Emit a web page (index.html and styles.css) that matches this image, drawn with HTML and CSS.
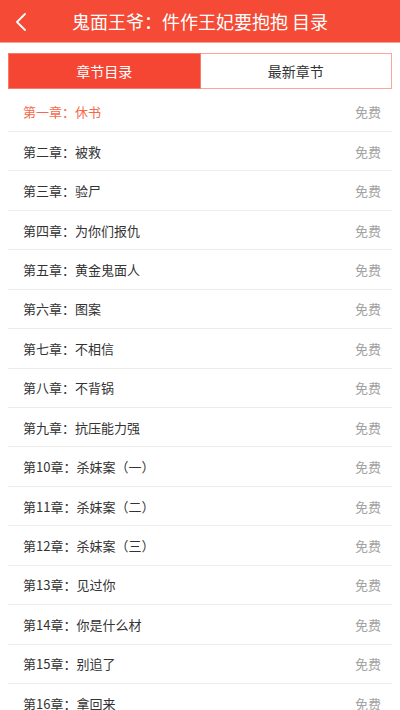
FILE: index.html
```html
<!DOCTYPE html>
<html lang="zh-CN">
<head>
<meta charset="utf-8">
<title>目录</title>
<link rel="stylesheet" href="styles.css">
</head>
<body>
<header class="header">
  <div class="back">
    <svg width="14" height="18" viewBox="0 0 14 18"><polyline points="11,1 3,9 11,17" fill="none" stroke="#fff" stroke-width="1.8" stroke-linecap="round" stroke-linejoin="round"/></svg>
  </div>
  <h1 class="title">鬼面王爷：件作王妃要抱抱 目录</h1>
  <div class="spacer"></div>
</header>
<nav class="tabs">
  <div class="tab active">章节目录</div>
  <div class="tab">最新章节</div>
</nav>
<ul class="list">
  <li class="row current"><span class="name">第一章：休书</span><span class="free">免费</span></li>
  <li class="row"><span class="name">第二章：被救</span><span class="free">免费</span></li>
  <li class="row"><span class="name">第三章：验尸</span><span class="free">免费</span></li>
  <li class="row"><span class="name">第四章：为你们报仇</span><span class="free">免费</span></li>
  <li class="row"><span class="name">第五章：黄金鬼面人</span><span class="free">免费</span></li>
  <li class="row"><span class="name">第六章：图案</span><span class="free">免费</span></li>
  <li class="row"><span class="name">第七章：不相信</span><span class="free">免费</span></li>
  <li class="row"><span class="name">第八章：不背锅</span><span class="free">免费</span></li>
  <li class="row"><span class="name">第九章：抗压能力强</span><span class="free">免费</span></li>
  <li class="row"><span class="name">第10章：杀妹案（一）</span><span class="free">免费</span></li>
  <li class="row"><span class="name">第11章：杀妹案（二）</span><span class="free">免费</span></li>
  <li class="row"><span class="name">第12章：杀妹案（三）</span><span class="free">免费</span></li>
  <li class="row"><span class="name">第13章：见过你</span><span class="free">免费</span></li>
  <li class="row"><span class="name">第14章：你是什么材</span><span class="free">免费</span></li>
  <li class="row"><span class="name">第15章：别追了</span><span class="free">免费</span></li>
  <li class="row"><span class="name">第16章：拿回来</span><span class="free">免费</span></li>
</ul>
</body>
</html>
```

FILE: styles.css
```css
* { box-sizing: border-box; }
html, body {
  margin: 0;
  padding: 0;
  background: #fff;
  font-family: "Noto Sans CJK SC", "Noto Sans", sans-serif;
  overflow: hidden;
}
.header {
  height: 43px;
  background: #f54a35;
  border-bottom: 1px solid #f9a195;
  display: grid;
  grid-template-columns: 44px 1fr 44px;
  align-items: center;
}
.back {
  display: flex;
  align-items: center;
  padding-left: 14px;
  padding-top: 1px;
}
.back svg { display: block; }
.title {
  margin: 0;
  color: #fff;
  font-size: 18px;
  font-weight: 400;
  text-align: center;
  white-space: nowrap;
  line-height: 42px;
}
.tabs {
  display: flex;
  margin: 10px 8px 0;
  height: 36px;
}
.tab {
  flex: 1;
  display: flex;
  align-items: center;
  justify-content: center;
  font-size: 14px;
  color: #333;
  border: 1px solid #fba59b;
  border-left: none;
  background: #fff;
}
.tab.active {
  background: #f54634;
  border: 1px solid #f77a6a;
  color: #fff;
}
.list {
  list-style: none;
  margin: 3.6px 8px 0;
  padding: 0;
}
.row {
  height: 39.43px;
  border-bottom: 1px solid #ececec;
  display: flex;
  align-items: center;
  justify-content: space-between;
  padding: 0 11px 0 15px;
  font-size: 13px;
  color: #333;
}
.row.current .name { color: #f5694a; }
.free { color: #a3a3a3; }
```
